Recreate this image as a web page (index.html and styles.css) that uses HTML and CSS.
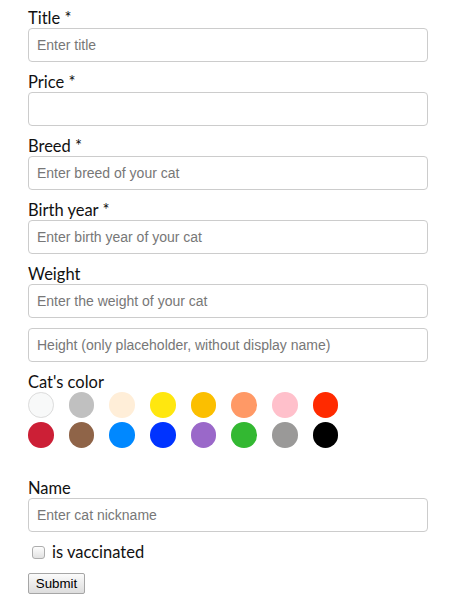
FILE: index.html
```html
<!DOCTYPE html>
<html>
<head>
<meta charset="utf-8">
<link rel="stylesheet" href="styles.css">
</head>
<body>
<form class="form">
  <div class="group">
    <label class="label">Title *</label>
    <input class="input" type="text" placeholder="Enter title">
  </div>
  <div class="group">
    <label class="label">Price *</label>
    <input class="input" type="text">
  </div>
  <div class="group">
    <label class="label">Breed *</label>
    <input class="input" type="text" placeholder="Enter breed of your cat">
  </div>
  <div class="group">
    <label class="label">Birth year *</label>
    <input class="input" type="text" placeholder="Enter birth year of your cat">
  </div>
  <div class="group">
    <label class="label">Weight</label>
    <input class="input" type="text" placeholder="Enter the weight of your cat">
  </div>
  <div class="group">
    <input class="input" type="text" placeholder="Height (only placeholder, without display name)">
  </div>
  <div class="group colors-group">
    <label class="label">Cat's color</label>
    <div class="swatches">
      <span class="swatch c-white"></span>
      <span class="swatch c-silver"></span>
      <span class="swatch c-cream"></span>
      <span class="swatch c-yellow"></span>
      <span class="swatch c-amber"></span>
      <span class="swatch c-salmon"></span>
      <span class="swatch c-pink"></span>
      <span class="swatch c-red"></span>
      <span class="swatch c-crimson"></span>
      <span class="swatch c-brown"></span>
      <span class="swatch c-azure"></span>
      <span class="swatch c-blue"></span>
      <span class="swatch c-purple"></span>
      <span class="swatch c-green"></span>
      <span class="swatch c-gray"></span>
      <span class="swatch c-black"></span>
    </div>
  </div>
  <div class="group">
    <label class="label">Name</label>
    <input class="input" type="text" placeholder="Enter cat nickname">
  </div>
  <div class="group check-row">
    <input class="checkbox" type="checkbox" id="vac">
    <label class="check-label" for="vac">is vaccinated</label>
  </div>
  <button class="submit" type="button">Submit</button>
</form>
</body>
</html>
```

FILE: styles.css
```css
html, body {
  margin: 0;
  padding: 0;
  background: #fff;
}
body {
  padding: 8px 20px 8px 28px;
  font-family: "Lato", "Noto Sans", sans-serif;
  color: #111111;
}
.form {
  width: 400px;
  display: flex;
  flex-direction: column;
  align-items: flex-start;
}
.group {
  width: 100%;
  display: flex;
  flex-direction: column;
  margin-bottom: 10px;
}
.label {
  display: block;
  font-size: 16.5px;
  line-height: 20px;
  height: 20px;
}
.input {
  box-sizing: border-box;
  width: 400px;
  height: 34px;
  margin: 0;
  padding: 0 8px;
  border: 1px solid #cccccc;
  border-radius: 4px;
  font-family: "Liberation Sans", Arial, sans-serif;
  font-size: 14px;
  color: #333;
  background: #fff;
  outline: none;
}
.input::placeholder {
  color: #777777;
}
.colors-group {
  margin-bottom: 30px;
}
.swatches {
  display: grid;
  grid-template-columns: repeat(8, 25.6px);
  column-gap: 15.1px;
  row-gap: 4.8px;
}
.swatch {
  display: block;
  width: 25.6px;
  height: 25.6px;
  border-radius: 50%;
  box-sizing: border-box;
}
.c-white { background: #f8f9f9; border: 1px solid #dcdcdc; }
.c-silver { background: #c0c0c0; }
.c-cream { background: #ffeed8; }
.c-yellow { background: #ffe70f; }
.c-amber { background: #fbbf00; }
.c-salmon { background: #ff9966; }
.c-pink { background: #ffc0cb; }
.c-red { background: #ff2a00; }
.c-crimson { background: #cc1f36; }
.c-brown { background: #8f6448; }
.c-azure { background: #0088ff; }
.c-blue { background: #0033ff; }
.c-purple { background: #9a68c9; }
.c-green { background: #33b832; }
.c-gray { background: #9a9998; }
.c-black { background: #000000; }
.check-row {
  flex-direction: row;
  align-items: center;
  height: 20px;
  margin-bottom: 11px;
}
.checkbox {
  -webkit-appearance: none;
  appearance: none;
  box-sizing: border-box;
  margin: 1px 3px 0 4px;
  width: 13px;
  height: 13px;
  border: 1px solid #adadad;
  border-radius: 3px;
  background: linear-gradient(#fdfdfd, #e2e2e2);
}
.check-label {
  font-size: 16.5px;
  line-height: 20px;
  margin-left: 4px;
}
.submit {
  font-family: "Liberation Sans", Arial, sans-serif;
  font-size: 13.33px;
  color: #000;
  margin: 0;
  box-sizing: border-box;
  width: 57px;
  height: 21px;
  padding: 0 6px;
  border: 1px solid #a6a6a6;
  border-radius: 2px;
  background: linear-gradient(#fbfbfb, #dddddd);
}
```
